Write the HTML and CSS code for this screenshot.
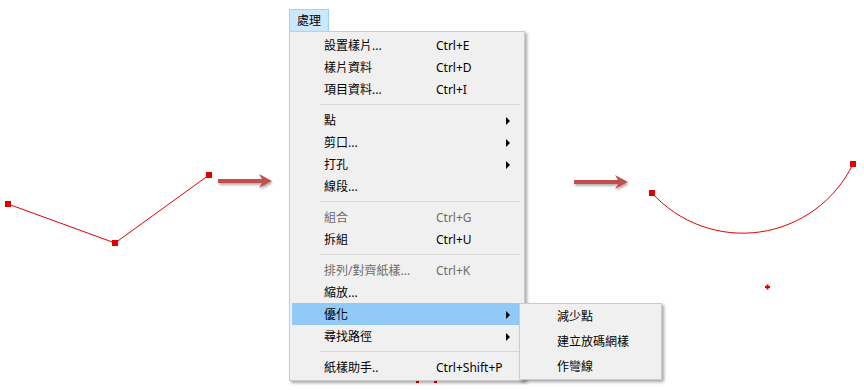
FILE: index.html
```html
<!DOCTYPE html>
<html lang="zh-Hant">
<head>
    <meta charset="UTF-8">
    <title>處理選單</title>
    <link rel="stylesheet" href="styles.css">
</head>
<body>
    <svg class="canvas" width="864" height="390" viewBox="0 0 864 390">
        <defs>
            <filter id="soft" x="-10%" y="-50%" width="120%" height="200%">
                <feDropShadow dx="1" dy="2" stdDeviation="1.2" flood-color="#000" flood-opacity="0.3"/>
            </filter>
        </defs>

        <!-- before -->
        <polyline points="8,204 115,243 209,175" fill="none" stroke="#e00000" stroke-width="1"/>
        <rect x="5" y="201" width="6" height="6" fill="#e00000"/>
        <rect x="112" y="240" width="6" height="6" fill="#e00000"/>
        <rect x="206" y="172" width="6" height="6" fill="#e00000"/>

        <!-- arrows -->
        <polygon class="arrow" filter="url(#soft)" points="218,179 262,179 259,174 272,181 259,188 262,183 218,183"/>
        <polygon class="arrow" filter="url(#soft)" points="574,180 618,180 615,175 628,182 615,189 618,184 574,184"/>

        <!-- after -->
        <path d="M652 193 A122.5 122.5 0 0 0 853 164" fill="none" stroke="#e00000" stroke-width="1"/>
        <rect x="649" y="190" width="6" height="6" fill="#e00000"/>
        <rect x="850" y="161" width="6" height="6" fill="#e00000"/>
        <path d="M765 287 h5 M767.5 284.5 v5" stroke="#e00000" stroke-width="2"/>

        <rect x="416" y="381" width="3" height="2" fill="#e00000"/>
        <rect x="434" y="381" width="3" height="2" fill="#e00000"/>
        <rect x="519" y="153" width="1" height="4" fill="#c8c8c8"/>
    </svg>

    <div class="menubar-item">處理</div>

    <div class="menu">
        <div class="item"><span class="label">設置樣片...</span><span class="key">Ctrl+E</span></div>
        <div class="item"><span class="label">樣片資料</span><span class="key">Ctrl+D</span></div>
        <div class="item"><span class="label">項目資料...</span><span class="key">Ctrl+I</span></div>
        <div class="sep"></div>
        <div class="item"><span class="label">點</span><span class="key"></span><span class="sub"></span></div>
        <div class="item"><span class="label">剪口...</span><span class="key"></span><span class="sub"></span></div>
        <div class="item"><span class="label">打孔</span><span class="key"></span><span class="sub"></span></div>
        <div class="item"><span class="label">線段...</span></div>
        <div class="sep"></div>
        <div class="item disabled"><span class="label">組合</span><span class="key">Ctrl+G</span></div>
        <div class="item"><span class="label">拆組</span><span class="key">Ctrl+U</span></div>
        <div class="sep"></div>
        <div class="item disabled"><span class="label">排列/對齊紙樣...</span><span class="key">Ctrl+K</span></div>
        <div class="item"><span class="label">縮放...</span></div>
        <div class="item active"><span class="label">優化</span><span class="key"></span><span class="sub"></span></div>
        <div class="item"><span class="label">尋找路徑</span><span class="key"></span><span class="sub"></span></div>
        <div class="sep"></div>
        <div class="item"><span class="label">紙樣助手..</span><span class="key">Ctrl+Shift+P</span></div>
    </div>

    <div class="submenu">
        <div class="sub-item">減少點</div>
        <div class="sub-item">建立放碼網樣</div>
        <div class="sub-item">作彎線</div>
    </div>
</body>
</html>
```

FILE: styles.css
```css
html, body {
    margin: 0;
    padding: 0;
}

body {
    width: 864px;
    height: 390px;
    position: relative;
    overflow: hidden;
    background-color: #fff;
    font-family: "Noto Sans", "Noto Sans CJK TC", sans-serif;
    font-size: 12px;
    color: #000;
}

.canvas {
    position: absolute;
    top: 0;
    left: 0;
}

.arrow {
    fill: #c0504d;
}

.menubar-item {
    position: absolute;
    left: 289px;
    top: 9px;
    width: 40px;
    height: 22px;
    box-sizing: border-box;
    padding-top: 1px;
    background-color: #cce8ff;
    border: 1px solid #99d1ff;
    border-bottom: none;
    display: flex;
    align-items: center;
    justify-content: center;
    line-height: 1;
}

.menu {
    position: absolute;
    left: 289px;
    top: 31px;
    width: 236px;
    box-sizing: border-box;
    padding: 2px 0;
    background-color: #f0f0f0;
    border: 1px solid #ccc;
    box-shadow: 2px 2px 3px rgba(0, 0, 0, 0.35);
}

.item {
    display: flex;
    align-items: center;
    box-sizing: border-box;
    height: 22px;
    margin: 0 2px;
    padding-top: 2px;
    padding-right: 12px;
    line-height: 1;
}

.item .label {
    width: 112px;
    padding-left: 32px;
    white-space: nowrap;
}

.item .key {
    flex: 1;
    white-space: nowrap;
}

.item .sub {
    width: 0;
    height: 0;
    border-left: 4px solid #000;
    border-top: 4px solid transparent;
    border-bottom: 4px solid transparent;
}

.item.disabled {
    color: #6d6d6d;
}

.item.active {
    background-color: #91c9f7;
}

.sep {
    height: 1px;
    margin: 4px 4px 4px 30px;
    background-color: #d7d7d7;
}

.submenu {
    position: absolute;
    left: 519px;
    top: 303px;
    width: 143px;
    box-sizing: border-box;
    background-color: #f0f0f0;
    border: 1px solid #ccc;
    box-shadow: 2px 2px 3px rgba(0, 0, 0, 0.35);
}

.sub-item {
    height: 25px;
    display: flex;
    align-items: center;
    padding-left: 37px;
    line-height: 1;
    white-space: nowrap;
}
```
